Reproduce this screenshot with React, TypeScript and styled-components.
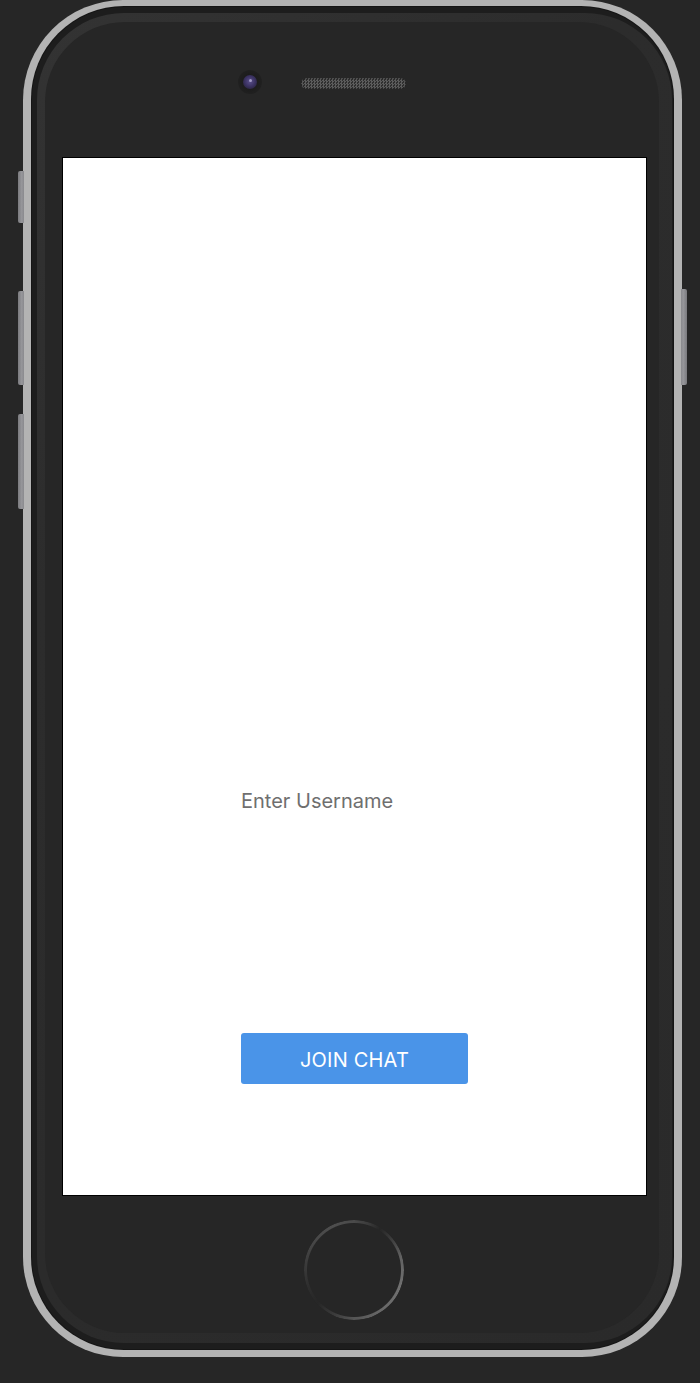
import React from "react";
import styled, { createGlobalStyle } from "styled-components";

const GlobalStyle = createGlobalStyle`
  html, body {
    margin: 0;
    padding: 0;
    background: #262626;
    overflow: hidden;
  }
  * { box-sizing: border-box; }
`;

const Stage = styled.div`
  width: 700px;
  height: 1383px;
  background: #262626;
  padding-left: 23px;
  padding-top: 0;
`;

const Phone = styled.div`
  position: relative;
  width: 659px;
  height: 1357px;
  padding: 7px 9px 8px 9px;
  background: #b3b3b3;
  border-radius: 100px;
`;

const SideButton = styled.div<{ $side: "left" | "right"; $top: number; $height: number }>`
  position: absolute;
  top: ${(p) => p.$top}px;
  ${(p) => (p.$side === "left" ? "left: -5px;" : "right: -5px;")}
  width: 6px;
  height: ${(p) => p.$height}px;
  background: linear-gradient(
    ${(p) => (p.$side === "left" ? "90deg" : "270deg")},
    #7a7a7e 0%,
    #96969a 60%,
    #8a8a8e 100%
  );
  border-radius: ${(p) => (p.$side === "left" ? "2px 0 0 2px" : "0 2px 2px 0")};
`;

const Shell = styled.div`
  height: 100%;
  padding: 6px 1px 6px 5px;
  background: #1d1d1d;
  border-radius: 92px;
  box-shadow: 0 0 0 1px #151515;
`;

const Bezel = styled.div`
  height: 100%;
  padding: 9px 13px 10px 8px;
  background: linear-gradient(135deg, #333333 0%, #2c2c2c 30%, #2a2a2a 100%);
  border-radius: 87px;
`;

const Body = styled.div`
  height: 100%;
  display: flex;
  flex-direction: column;
  background: #262626;
  border-radius: 80px;
  padding: 0 12px 0 17px;
`;

const TopArea = styled.div`
  height: 135px;
  flex: none;
  display: grid;
  grid-template-columns: 1fr auto 1fr;
  align-items: center;
  padding-bottom: 13px;
`;

const Camera = styled.div`
  justify-self: end;
  margin-right: 41px;
  margin-top: -2px;
  width: 24px;
  height: 24px;
  border-radius: 50%;
  display: flex;
  align-items: center;
  justify-content: center;
  background: radial-gradient(circle, #1c1c1c 40%, #202020 70%, #242424 100%);
`;

const Lens = styled.div`
  width: 14px;
  height: 14px;
  border-radius: 50%;
  display: flex;
  align-items: center;
  justify-content: center;
  background: radial-gradient(circle at 50% 45%, #5a4f8a 0%, #3d3466 45%, #2a2440 80%, #1d1a28 100%);
`;

const Glint = styled.div`
  width: 3px;
  height: 3px;
  margin-top: -3px;
  border-radius: 50%;
  background: #b7b0d8;
  opacity: 0.8;
`;

const Speaker = styled.div`
  margin-left: -2px;
  width: 105px;
  height: 11px;
  border-radius: 6px;
  background: repeating-conic-gradient(#5c5c5c 0 25%, #2f2f2f 0 50%) 0 0 / 3px 3px;
  box-shadow: inset 0 0 2px rgba(0, 0, 0, 0.6);
`;

const Screen = styled.div`
  height: 1039px;
  flex: none;
  background: #ffffff;
  border: 1px solid #000000;
  display: flex;
  flex-direction: column;
  align-items: center;
  padding-top: 623px;
  gap: 212px;
`;

const UsernameInput = styled.input`
  width: 227px;
  height: 40px;
  padding: 0;
  border: none;
  outline: none;
  background: transparent;
  font-family: Inter, "Liberation Sans", sans-serif;
  font-size: 20px;
  color: #333333;
  &::placeholder {
    color: #6f6f6f;
  }
`;

const JoinButton = styled.button`
  width: 227px;
  height: 51px;
  border: none;
  border-radius: 3px;
  background: #4a94e8;
  color: #ffffff;
  font-family: Inter, "Liberation Sans", sans-serif;
  font-size: 20px;
  font-weight: 400;
  letter-spacing: 0.2px;
  cursor: pointer;
  display: flex;
  align-items: center;
  justify-content: center;
  padding: 2px 0 0;
`;

const BottomArea = styled.div`
  flex: 1;
  display: flex;
  justify-content: center;
  padding-top: 24px;
  padding-right: 2px;
`;

const HomeButton = styled.div`
  width: 100px;
  height: 100px;
  border-radius: 50%;
  background: conic-gradient(
    #4a4a4a 0deg,
    #3a3a3a 18deg,
    #262626 32deg,
    #3c3c3c 50deg,
    #626262 75deg,
    #707070 110deg,
    #686868 145deg,
    #555555 180deg,
    #3a3a3a 205deg,
    #262626 228deg,
    #2e2e2e 250deg,
    #3a3a3a 275deg,
    #474747 305deg,
    #4e4e4e 335deg,
    #4a4a4a 360deg
  );
  -webkit-mask: radial-gradient(circle, transparent 46.5px, #000 47.5px);
  mask: radial-gradient(circle, transparent 46.5px, #000 47.5px);
`;

export default function App() {
  return (
    <>
      <GlobalStyle />
      <Stage>
        <Phone>
          <SideButton $side="left" $top={171} $height={52} />
          <SideButton $side="left" $top={291} $height={94} />
          <SideButton $side="left" $top={414} $height={95} />
          <SideButton $side="right" $top={289} $height={96} />
          <Shell>
            <Bezel>
              <Body>
                <TopArea>
                  <Camera>
                    <Lens>
                      <Glint />
                    </Lens>
                  </Camera>
                  <Speaker />
                  <div />
                </TopArea>
                <Screen>
                  <UsernameInput placeholder="Enter Username" />
                  <JoinButton>JOIN CHAT</JoinButton>
                </Screen>
                <BottomArea>
                  <HomeButton />
                </BottomArea>
              </Body>
            </Bezel>
          </Shell>
        </Phone>
      </Stage>
    </>
  );
}
